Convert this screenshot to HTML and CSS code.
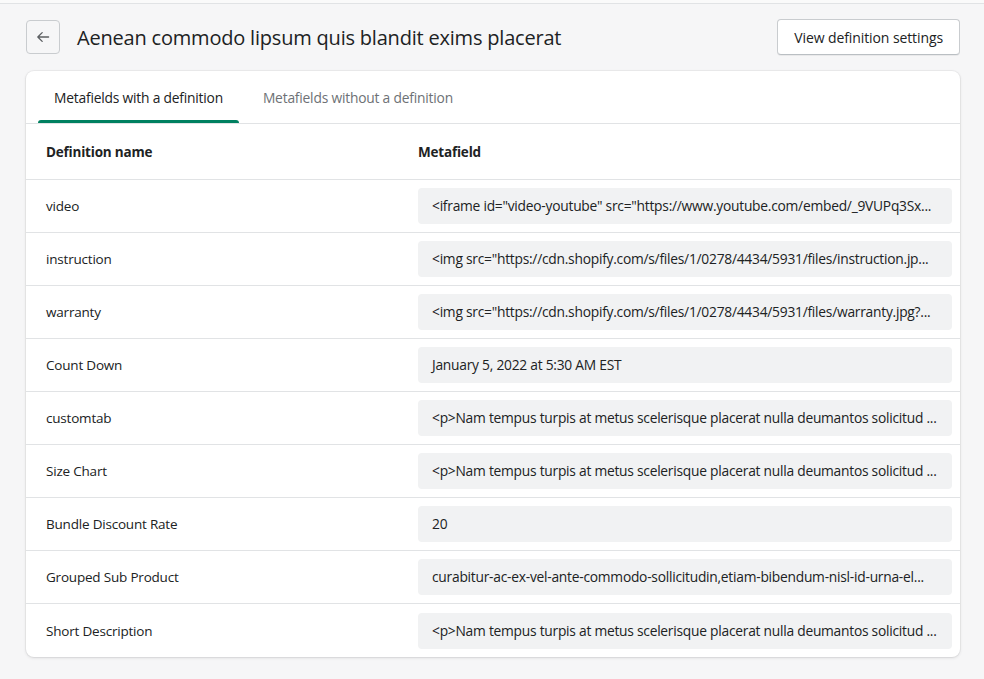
FILE: index.html
```html
<!DOCTYPE html>
<html>
<head>
<meta charset="utf-8">
<link rel="stylesheet" href="styles.css">
</head>
<body>
<div class="page">
  <header class="header">
    <div class="header-left">
      <button class="back" aria-label="Back">
        <svg width="16" height="16" viewBox="0 0 20 20"><path d="M17 10H4M9 4.5L3.5 10 9 15.5" fill="none" stroke="#5c5f62" stroke-width="1.6" stroke-linecap="round" stroke-linejoin="round"/></svg>
      </button>
      <h1 class="title">Aenean commodo lipsum quis blandit exims placerat</h1>
    </div>
    <button class="btn">View definition settings</button>
  </header>
  <section class="card">
    <nav class="tabs">
      <div class="tab active">Metafields with a definition</div>
      <div class="tab">Metafields without a definition</div>
    </nav>
    <div class="table">
      <div class="row head"><div class="name">Definition name</div><div class="meta">Metafield</div></div>
      <div class="row"><div class="name">video</div><div class="value">&lt;iframe id="video-youtube" src="https://www.youtube.com/embed/_9VUPq3Sx...</div></div>
      <div class="row"><div class="name">instruction</div><div class="value">&lt;img src="https://cdn.shopify.com/s/files/1/0278/4434/5931/files/instruction.jp...</div></div>
      <div class="row"><div class="name">warranty</div><div class="value">&lt;img src="https://cdn.shopify.com/s/files/1/0278/4434/5931/files/warranty.jpg?...</div></div>
      <div class="row"><div class="name">Count Down</div><div class="value">January 5, 2022 at 5:30 AM EST</div></div>
      <div class="row"><div class="name">customtab</div><div class="value">&lt;p&gt;Nam tempus turpis at metus scelerisque placerat nulla deumantos solicitud ...</div></div>
      <div class="row"><div class="name">Size Chart</div><div class="value">&lt;p&gt;Nam tempus turpis at metus scelerisque placerat nulla deumantos solicitud ...</div></div>
      <div class="row"><div class="name">Bundle Discount Rate</div><div class="value">20</div></div>
      <div class="row"><div class="name">Grouped Sub Product</div><div class="value">curabitur-ac-ex-vel-ante-commodo-sollicitudin,etiam-bibendum-nisl-id-urna-el...</div></div>
      <div class="row last"><div class="name">Short Description</div><div class="value">&lt;p&gt;Nam tempus turpis at metus scelerisque placerat nulla deumantos solicitud ...</div></div>
    </div>
  </section>
</div>
</body>
</html>
```
FILE: styles.css
```css
* { box-sizing: border-box; }
html, body { margin: 0; }
body {
  background: #f6f6f7;
  font-family: "Open Sans", "Noto Sans", sans-serif;
  color: #202223;
  border-top: 3px solid #fafafa;
}
.page {
  padding: 16px 24px 20px 26px;
  position: relative;
}
.page::before {
  content: "";
  position: absolute;
  left: 0; right: 0; top: 0;
  height: 1px;
  background: #e1e3e5;
}
.header {
  display: flex;
  align-items: center;
  justify-content: space-between;
  height: 36px;
  margin-bottom: 16px;
}
.header-left { display: flex; align-items: center; gap: 17px; }
.back {
  width: 34px; height: 34px;
  border: 1px solid #c9cccf;
  border-radius: 4px;
  background: transparent;
  display: flex; align-items: center; justify-content: center;
  padding: 0;
}
.title {
  margin: 0;
  font-size: 20px;
  font-weight: 500;
  letter-spacing: -0.2px;
  color: #202223;
}
.btn {
  height: 36px;
  padding: 0 16px;
  background: #fff;
  border: 1px solid #c9cccf;
  border-bottom-color: #babfc3;
  border-radius: 4px;
  box-shadow: 0 1px 0 rgba(0,0,0,0.05);
  font-family: inherit;
  font-size: 14px;
  font-weight: 500;
  letter-spacing: -0.1px;
  color: #202223;
}
.card {
  background: #fff;
  border-radius: 8px;
  box-shadow: 0 0 0 1px rgba(63,63,68,0.05), 0 1px 3px rgba(63,63,68,0.15);
  overflow: hidden;
}
.tabs {
  display: flex;
  gap: 8px;
  padding: 0 12px;
  border-bottom: 1px solid #e1e3e5;
  height: 53px;
}
.tab {
  position: relative;
  padding: 0 16px;
  display: flex;
  align-items: center;
  font-size: 13.8px;
  letter-spacing: -0.2px;
  color: #6d7175;
}
.tab.active { color: #202223; }
.tab.active::after {
  content: "";
  position: absolute;
  left: 0; right: 0; bottom: 0;
  height: 3px;
  background: #008060;
  border-radius: 3px 3px 0 0;
}
.row {
  display: grid;
  grid-template-columns: 372px 1fr;
  align-items: center;
  height: 53px;
  padding: 0 8px 0 20px;
  border-bottom: 1px solid #e1e3e5;
  font-size: 13.5px;
  letter-spacing: -0.2px;
}
.row.last { border-bottom: none; }
.row.head { height: 56px; font-weight: 700; }
.name { color: #202223; }
.value {
  background: #f1f2f3;
  border-radius: 4px;
  height: 36px;
  line-height: 36px;
  padding: 0 14px;
  white-space: nowrap;
  overflow: hidden;
  font-size: 13.8px;
  letter-spacing: -0.25px;
  color: #202223;
}
```
